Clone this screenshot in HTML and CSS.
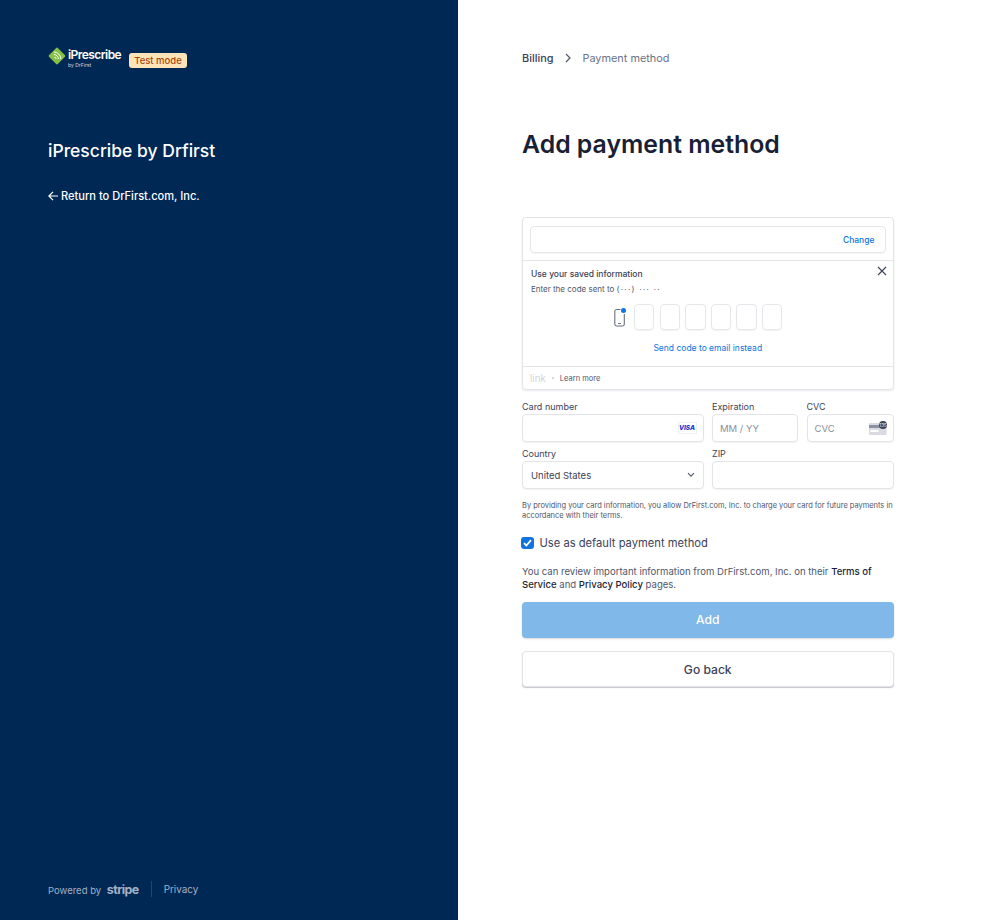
FILE: index.html
```html
<!DOCTYPE html>
<html lang="en">
<head>
    <meta charset="UTF-8">
    <meta name="viewport" content="width=device-width, initial-scale=1.0">
    <title>Add payment method</title>
    <link rel="stylesheet" href="styles.css">
</head>
<body>
    <div class="page">
        <aside class="side">
            <div class="side-top">
                <div class="brand">
                    <div class="logo">
                        <svg class="logo-mark" width="18" height="18" viewBox="0 0 18 18">
                            <rect x="2.700" y="2.700" width="12.600" height="12.600" rx="1.500" transform="rotate(45 9 9)" fill="#84c044"/>
                            <path d="M5.500 8.500a4.500 4.500 0 0 1 4.500 4.500M5.500 6a7 7 0 0 1 7 7M6.200 11.200a1.600 1.600 0 0 1 1.600 1.600" transform="translate(.3 -1)" fill="none" stroke="#fff" stroke-width="1"/>
                        </svg>
                        <div class="logo-text">
                            <span class="logo-name">iPrescribe</span>
                            <span class="logo-by">by DrFirst</span>
                        </div>
                    </div>
                    <span class="test-badge">Test mode</span>
                </div>
                <h2 class="merchant">iPrescribe by Drfirst</h2>
                <a class="return-link">
                    <svg width="10" height="10" viewBox="0 0 10 10"><path d="M5 .8 .9 5 5 9.200M1 5h9" fill="none" stroke="#fff" stroke-width="1.200"/></svg>
                    Return to DrFirst.com, Inc.
                </a>
            </div>
            <div class="side-foot">
                <span class="powered">Powered by <b class="stripe">stripe</b></span>
                <span class="foot-sep"></span>
                <a class="foot-link">Privacy</a>
            </div>
        </aside>

        <main class="content">
            <nav class="crumbs">
                <span class="crumb-on">Billing</span>
                <svg width="8" height="10" viewBox="0 0 8 10"><path d="M2 1l4 4-4 4" fill="none" stroke="#4f566b" stroke-width="1.200"/></svg>
                <span>Payment method</span>
            </nav>
            <h1>Add payment method</h1>

            <div class="link-card">
                <div class="email-row">
                    <div class="email-box"><a class="change">Change</a></div>
                </div>
                <div class="code-panel">
                    <svg class="close" width="10" height="10" viewBox="0 0 10 10"><path d="M1 1l8 8M9 1l-8 8" fill="none" stroke="#3c4257" stroke-width="1.100"/></svg>
                    <div class="code-title">Use your saved information</div>
                    <div class="code-sub">Enter the code sent to <span class="dots">(···) ··· ··</span></div>
                    <div class="code-row">
                        <svg class="phone" width="13" height="19" viewBox="-1 0 13 19">
                            <path d="M6.500 1.500H2.500A1.800 1.800 0 0 0 .8 3.300v13A1.800 1.800 0 0 0 2.500 18h6a1.800 1.800 0 0 0 1.800-1.800V6" fill="none" stroke="#6b7080" stroke-width="1.100"/>
                            <path d="M4 15.500h2.800" stroke="#6b7080"/>
                            <circle cx="9.500" cy="2.600" r="2.500" fill="#0f74e0"/>
                        </svg>
                        <span class="code-box"></span><span class="code-box"></span><span class="code-box"></span>
                        <span class="code-box"></span><span class="code-box"></span><span class="code-box"></span>
                    </div>
                    <a class="send-email">Send code to email instead</a>
                </div>
                <div class="link-foot">
                    <span class="link-logo">link</span>
                    <span class="dot"></span>
                    <span>Learn more</span>
                </div>
            </div>

            <div class="fields">
                <label class="field card-num">
                    <span class="field-label">Card number</span>
                    <span class="input"><span class="visa">VISA</span></span>
                </label>
                <label class="field">
                    <span class="field-label">Expiration</span>
                    <span class="input placeholder">MM / YY</span>
                </label>
                <label class="field">
                    <span class="field-label">CVC</span>
                    <span class="input placeholder">CVC
                        <svg class="cvc-icon" width="19" height="14" viewBox="0 0 19 14">
                            <rect x="0" y="2" width="17.500" height="12" rx="1" fill="#d9dbe1"/>
                            <rect x="0" y="4" width="17.500" height="3" fill="#8d92a0"/>
                            <rect x="1.500" y="9" width="8" height="2" fill="#fff"/>
                            <circle cx="14" cy="4" r="4" fill="#3c4257"/>
                            <text x="14" y="5.800" class="cvc-num">135</text>
                        </svg>
                    </span>
                </label>
                <label class="field country">
                    <span class="field-label">Country</span>
                    <span class="input select">United States
                        <svg width="10" height="6" viewBox="0 0 10 6"><path d="M2 1.200l3 3 3-3" fill="none" stroke="#4f566b" stroke-width="1.100"/></svg>
                    </span>
                </label>
                <label class="field zip">
                    <span class="field-label">ZIP</span>
                    <span class="input"></span>
                </label>
            </div>

            <p class="consent">By providing your card information, you allow DrFirst.com, Inc. to charge your card for future payments in accordance with their terms.</p>

            <div class="default-row">
                <span class="checkbox">
                    <svg width="9" height="8" viewBox="0 0 9 8"><path d="M1 4.200 3.400 6.500 8 1.200" fill="none" stroke="#fff" stroke-width="1.800"/></svg>
                </span>
                Use as default payment method
            </div>

            <p class="terms">You can review important information from DrFirst.com, Inc. on their <b>Terms of</b> <b>Service</b> and <b>Privacy Policy</b> pages.</p>

            <button class="btn btn-add">Add</button>
            <button class="btn btn-back">Go back</button>
        </main>
    </div>
</body>
</html>
```

FILE: styles.css
```css
* {
    box-sizing: border-box;
}

body {
    margin: 0;
    font-family: Inter, 'Noto Sans', sans-serif;
    color: #1a1f36;
    background: white;
}

.page {
    display: flex;
    height: 920px;
}

/* left panel */
.side {
    width: 458px;
    padding: 46px 48px 22px;
    background: #002855;
    color: white;
    display: flex;
    flex-direction: column;
    justify-content: space-between;
}

.brand {
    display: flex;
    align-items: center;
    gap: 8px;
    height: 24px;
}

.logo {
    display: flex;
    align-items: center;
    gap: 2px;
}

.logo-mark {
    margin-top: -4px;
}

.logo-text {
    display: flex;
    flex-direction: column;
    line-height: 1;
}

.logo-name {
    font-size: 12px;
    font-weight: 600;
    letter-spacing: -0.55px;
}

.logo-by {
    font-size: 5px;
    margin-top: 2px;
    color: #d5dbe5;
}

.test-badge {
    margin-top: 4px;
    padding: 1px 5px;
    font-size: 9.500px;
    font-weight: 500;
    line-height: 13px;
    color: #a8460f;
    background: #fde4b8;
    border-radius: 3px;
}

.merchant {
    margin: 69px 0 0;
    font-size: 17.500px;
    font-weight: 500;
    line-height: 24px;
}

.return-link {
    display: flex;
    align-items: center;
    gap: 3px;
    margin-top: 25px;
    font-size: 11.050px;
    font-weight: 500;
    line-height: 16px;
}

.side-foot {
    display: flex;
    align-items: center;
    height: 18px;
    font-size: 9.500px;
    color: #a3b0c2;
}

.stripe {
    margin-left: 3px;
    font-size: 12.500px;
    font-weight: 700;
    letter-spacing: -0.6px;
    color: #a3b0c2;
}

.foot-sep {
    width: 1px;
    height: 16px;
    margin: 0 12px;
    background: #24466d;
}

.foot-link {
    margin-top: -1px;
    font-size: 9.900px;
}

/* right panel */
.content {
    width: 371.500px;
    margin-left: 64px;
    padding-top: 51px;
}

.crumbs {
    display: flex;
    align-items: center;
    gap: 10.500px;
    height: 14px;
    font-size: 10.900px;
    color: #697386;
}

.crumb-on {
    color: #3c4257;
    font-weight: 500;
}

h1 {
    margin: 63px 0 0;
    font-size: 24.800px;
    font-weight: 600;
    line-height: 32px;
}

.link-card {
    margin-top: 57px;
    border: 1px solid #e3e4e8;
    border-radius: 4px;
    box-shadow: 0 1px 2px rgba(60, 66, 87, 0.12);
}

.email-row {
    padding: 8px 7px 7px;
    border-bottom: 1px solid #e3e4e8;
}

.email-box {
    height: 27px;
    padding-right: 10px;
    display: flex;
    align-items: center;
    justify-content: flex-end;
    border: 1px solid #e6e7ea;
    border-radius: 4px;
    box-shadow: 0 1px 1px rgba(0, 0, 0, 0.04);
}

.change {
    font-size: 8.500px;
    font-weight: 500;
    color: #0f74e0;
}

.code-panel {
    position: relative;
    height: 105px;
    padding: 7px 8px 0;
}

.close {
    position: absolute;
    top: 5px;
    right: 6px;
}

.code-title {
    font-size: 8.500px;
    font-weight: 500;
    line-height: 12px;
    color: #3c4257;
}

.code-sub {
    margin-top: 3px;
    font-size: 8px;
    line-height: 12px;
    color: #4f566b;
}

.dots {
    letter-spacing: 1.300px;
}

.code-row {
    display: flex;
    justify-content: center;
    align-items: center;
    gap: 5.300px;
    margin-top: 9px;
    padding-right: 20px;
}

.phone {
    margin-right: 2.700px;
}

.code-box {
    width: 20.300px;
    height: 26px;
    border: 1px solid #e6e7ea;
    border-radius: 4px;
    box-shadow: 0 1px 1px rgba(0, 0, 0, 0.05);
}

.send-email {
    display: block;
    margin-top: 12px;
    text-align: center;
    font-size: 8.500px;
    line-height: 12px;
    color: #0f74e0;
}

.link-foot {
    display: flex;
    align-items: center;
    gap: 6px;
    height: 23px;
    padding-left: 7px;
    border-top: 1px solid #e3e4e8;
    font-size: 7.500px;
    color: #4f566b;
}

.link-logo {
    font-size: 10px;
    font-weight: 300;
    color: #c8cacf;
}

.dot {
    width: 2px;
    height: 2px;
    border-radius: 50%;
    background: #c8cacf;
}

.fields {
    display: grid;
    grid-template-columns: 181.500px 86px 87px;
    column-gap: 8.500px;
    row-gap: 5px;
    margin-top: 10px;
}

.field {
    display: flex;
    flex-direction: column;
}

.country {
    grid-column: 1;
}

.zip {
    grid-column: 2 / 4;
}

.field-label {
    font-size: 9px;
    line-height: 14px;
    color: #3c4257;
}

.input {
    height: 28px;
    padding: 0 7px;
    display: flex;
    align-items: center;
    justify-content: space-between;
    border: 1px solid #e3e4e8;
    border-radius: 4px;
    box-shadow: 0 1px 1px rgba(0, 0, 0, 0.05);
    font-size: 9.500px;
    color: #3c4257;
}

.placeholder {
    color: #8a8f9c;
}

.card-num .input {
    justify-content: flex-end;
    padding-right: 6px;
}

.select {
    padding-left: 8px;
}

.visa {
    width: 19px;
    height: 12px;
    display: flex;
    align-items: center;
    justify-content: center;
    font-size: 6.500px;
    font-weight: 800;
    font-style: italic;
    color: #1434cb;
    border: 1px solid #eff0f3;
}

.cvc-icon {
    margin-right: -2px;
}

.cvc-num {
    font-size: 4.500px;
    font-family: Inter, sans-serif;
    fill: white;
    text-anchor: middle;
}

.consent {
    margin: 12px 0 0;
    font-size: 7.460px;
    line-height: 10px;
    color: #4f566b;
}

.default-row {
    display: flex;
    align-items: center;
    gap: 6px;
    margin-top: 15px;
    height: 14px;
    font-size: 11.200px;
    color: #3c4257;
}

.checkbox {
    width: 12.500px;
    height: 12.500px;
    margin-left: -1px;
    display: flex;
    align-items: center;
    justify-content: center;
    background: #0f74e0;
    border-radius: 3px;
}

.terms {
    margin: 15px 0 0;
    font-size: 9.550px;
    line-height: 13px;
    color: #4f566b;
}

.terms b {
    font-weight: 500;
    color: #1a1f36;
}

.btn {
    display: block;
    width: 100%;
    font-family: inherit;
    font-size: 12.100px;
    font-weight: 500;
    border-radius: 4px;
    cursor: pointer;
}

.btn-add {
    height: 35.500px;
    margin-top: 11px;
    border: none;
    background: #80b8e9;
    color: white;
    box-shadow: 0 1px 2px rgba(60, 66, 87, 0.2);
}

.btn-back {
    height: 36px;
    margin-top: 13px;
    padding-top: 2px;
    border: 1px solid #e3e4e8;
    background: white;
    color: #3c4257;
    box-shadow: 0 1px 1px rgba(60, 66, 87, 0.3);
}
```
